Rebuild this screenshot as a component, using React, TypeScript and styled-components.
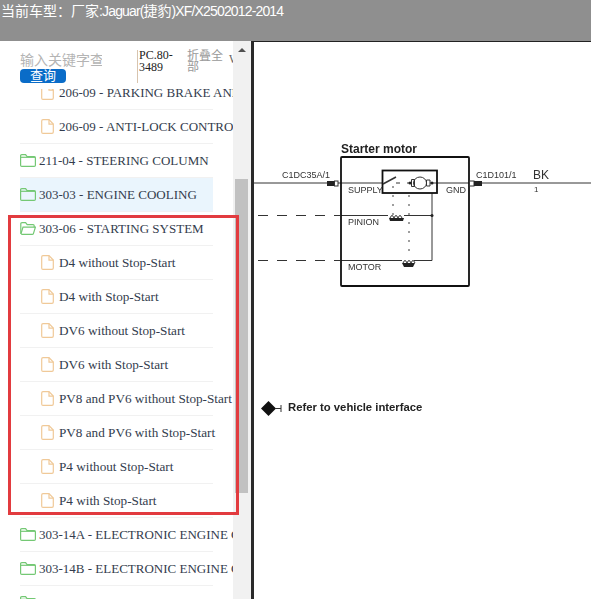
import styled, { createGlobalStyle } from "styled-components";

const GlobalStyle = createGlobalStyle`
  html, body {
    margin: 0;
    padding: 0;
    background: #fff;
    overflow: hidden;
  }
  * {
    box-sizing: border-box;
  }
`;

type TreeItem = {
  label: string;
  kind: "folder" | "open" | "file";
  active?: boolean;
  caps?: boolean;
};

const items: TreeItem[] = [
  { label: "206-09 - PARKING BRAKE AND ACTUATION", kind: "file", caps: true },
  { label: "206-09 - ANTI-LOCK CONTROL", kind: "file", caps: true },
  { label: "211-04 - STEERING COLUMN", kind: "folder", caps: true },
  { label: "303-03 - ENGINE COOLING", kind: "folder", active: true, caps: true },
  { label: "303-06 - STARTING SYSTEM", kind: "open", caps: true },
  { label: "D4 without Stop-Start", kind: "file" },
  { label: "D4 with Stop-Start", kind: "file" },
  { label: "DV6 without Stop-Start", kind: "file" },
  { label: "DV6 with Stop-Start", kind: "file" },
  { label: "PV8 and PV6 without Stop-Start", kind: "file" },
  { label: "PV8 and PV6 with Stop-Start", kind: "file" },
  { label: "P4 without Stop-Start", kind: "file" },
  { label: "P4 with Stop-Start", kind: "file" },
  { label: "303-14A - ELECTRONIC ENGINE CONTROLS", kind: "folder", caps: true },
  { label: "303-14B - ELECTRONIC ENGINE CONTROLS", kind: "folder", caps: true },
  { label: "303-14D - ELECTRONIC ENGINE CONTROLS", kind: "folder", caps: true },
];

const TreeIcon = ({ kind }: { kind: TreeItem["kind"] }) => {
  if (kind === "file") {
    return (
      <IconSvg width="13" height="15" viewBox="0 0 13 15" fill="none" stroke="#f0c998" strokeWidth="1.2">
        <path d="M.7 1.900Q.7.6 2 .6h6l4.300 4.400v8.100q0 1.300-1.300 1.300H2q-1.300 0-1.300-1.300z" />
        <path d="M8 .7v4.400h4.300" />
      </IconSvg>
    );
  }
  if (kind === "open") {
    return (
      <IconSvg width="16" height="13" viewBox="0 0 16 13" fill="none" stroke="#74c874" strokeWidth="1.2">
        <path d="M.8 11.800V1.800Q.8.6 2 .6h3.600L7.200 2.600h5.900q1.100 0 1.100 1.100v1.500" />
        <path d="M.9 12.200 3 5.200h12.400l-1.900 6.100q-.3 1.100-1.300 1.100H1.300" />
      </IconSvg>
    );
  }
  return (
    <IconSvg width="16" height="13" viewBox="0 0 16 13" fill="none" stroke="#74c874" strokeWidth="1.2">
      <path d="M.6 2.900V1.800Q.6.6 1.800.6h3.800L7.100 2.700h7.100q1.200 0 1.200 1.200v7.300q0 1.200-1.200 1.200H1.800Q.6 12.400.6 11.200z" />
      <path d="M.6 3.300h14.800" />
    </IconSvg>
  );
};

// hump row used by the pinion and motor solenoids
const coil = (x: number, y: number, n: number) => {
  let d = `M${x} ${y}`;
  for (let i = 0; i < n; i++) d += `q2-5 4 0`;
  return d;
};

const dots = (x: number, from: number, to: number, step: number) => {
  const out: number[] = [];
  for (let y = from; y <= to; y += step) out.push(y);
  return out.map((y) => <circle key={`${x}-${y}`} cx={x} cy={y} r="0.8" />);
};

// viewBox is in page pixels so the coordinates read straight off the reference
const CircuitDiagram = () => (
  <Diagram viewBox="254 42 337 557" width="337" height="557">
    <g fill="none" stroke="#333" strokeWidth="1">
      <path d="M254 183H327M338 183H383M396 183H400M407 183H411M430 183H437M437 183H469M482 183H591" />
      <path d="M258 215.500H340" strokeDasharray="10 9" />
      <path d="M258 260.500H340" strokeDasharray="10 9" />
      <path d="M341 215.500H388M404 215.500H432M341 260.500H402M414 260.500H432V193" />
    </g>
    <g fill="none" stroke="#111" strokeWidth="1.800">
      <rect x="341" y="157" width="128" height="129" rx="1" />
      <rect x="382.500" y="170.500" width="54.500" height="22.500" />
    </g>
    <g fill="none" stroke="#333" strokeWidth="1">
      <path d="M383 184 L396 177" strokeWidth="1.500" />
      <ellipse cx="420" cy="183" rx="6.500" ry="6" />
      <path d="M411.500 179.500h3v7h-3zM426.500 180h3.500v6h-3.500z" />
      <path d={coil(390, 218, 3)} />
      <path d={coil(403, 263, 3)} />
      <rect x="334.500" y="181" width="3.500" height="5" />
      <rect x="469.500" y="181" width="4.500" height="5" />
    </g>
    <g fill="#222">
      <circle cx="410" cy="183" r="1.500" />
      <circle cx="432" cy="183" r="1.500" />
      <circle cx="432" cy="215.500" r="1.500" />
      <rect x="327" y="181" width="7" height="5" />
      <rect x="474" y="181" width="8" height="5" />
      <path d="M389 218h15l-1 3h-13zM402 263h13l-2 4h-9z" />
      {dots(393, 187, 214, 9)}
      {dots(409, 196, 258, 9)}
    </g>
    <TitleText x="341" y="153">Starter motor</TitleText>
    <SmallText x="282" y="178">C1DC35A/1</SmallText>
    <SmallText x="476" y="178">C1D101/1</SmallText>
    <WireText x="533" y="179">BK</WireText>
    <TinyText x="534" y="192">1</TinyText>
    <SmallText x="348" y="193">SUPPLY</SmallText>
    <SmallText x="446" y="193">GND</SmallText>
    <SmallText x="348" y="225">PINION</SmallText>
    <SmallText x="348" y="270">MOTOR</SmallText>
    <path d="M268.500 401l-7.500 7.500 7.500 7.500 7.500-7.500z" fill="#111" />
    <path d="M275 408.500H281M281 405V412" stroke="#333" fill="none" />
    <NoteText x="288" y="411">Refer to vehicle interface</NoteText>
  </Diagram>
);

export default function App() {
  return (
    <>
      <GlobalStyle />
      <Page>
        <Header>
          当前车型：厂家<Latin>:Jaguar(</Latin>捷豹<Latin>)XF/X2502012-2014</Latin>
        </Header>
        <Body>
          <Sidebar>
            <Panel>
              <SearchBar>
                <SearchBox>
                  <SearchInput placeholder="输入关键字查询" readOnly />
                  <SearchButton>查询</SearchButton>
                </SearchBox>
                <PartNo>PC.80-3489</PartNo>
                <Collapse>折叠全部</Collapse>
                <Extra>W</Extra>
              </SearchBar>
              <TreeList>
                {items.map((item) => (
                  <TreeRow key={item.label} $active={item.active} $child={item.kind === "file"}>
                    <TreeIcon kind={item.kind} />
                    <RowLabel $caps={item.caps}>{item.label}</RowLabel>
                  </TreeRow>
                ))}
              </TreeList>
            </Panel>
            <ScrollTrack>
              <ArrowUp />
              <ScrollThumb />
            </ScrollTrack>
          </Sidebar>
          <Viewer>
            <CircuitDiagram />
          </Viewer>
        </Body>
        <Highlight />
      </Page>
    </>
  );
}

const Page = styled.div`
  position: relative;
  width: 591px;
  height: 599px;
  overflow: hidden;
  display: flex;
  flex-direction: column;
  background: #fff;
`;

const Header = styled.div`
  height: 41px;
  padding: 2px 0 0 1px;
  background: #8f8f8f;
  color: #fff;
  font: 14px/18px "Liberation Sans", "Noto Sans CJK SC", sans-serif;
  white-space: pre;
`;

const Latin = styled.span`
  font-size: 14px;
  letter-spacing: -0.85px;
`;

const Body = styled.div`
  flex: 1;
  display: flex;
  min-height: 0;
`;

const Sidebar = styled.div`
  width: 251px;
  flex: none;
  display: flex;
`;

const Panel = styled.div`
  width: 233px;
  flex: none;
  display: flex;
  flex-direction: column;
  overflow: hidden;
`;

const SearchBar = styled.div`
  height: 48px;
  flex: none;
  display: flex;
  align-items: flex-start;
  padding: 9px 0 0 20px;
  font-family: "Liberation Serif", "Noto Sans CJK SC", serif;
`;

const SearchBox = styled.div`
  width: 82px;
  flex: none;
  margin-right: 35px;
  display: flex;
  flex-direction: column;
`;

const SearchInput = styled.input`
  width: 82px;
  height: 19px;
  padding: 0;
  border: none;
  outline: none;
  background: transparent;
  font: 14px "Liberation Sans", "Noto Sans CJK SC", sans-serif;
  &::placeholder {
    color: #b4b4b4;
    opacity: 1;
  }
`;

const SearchButton = styled.div`
  width: 46px;
  height: 14px;
  border-radius: 4px;
  background: #0a6cc8;
  color: #fff;
  text-align: center;
  font: 13px/14px "Liberation Sans", "Noto Sans CJK SC", sans-serif;
`;

const PartNo = styled.div`
  width: 50px;
  flex: none;
  height: 33px;
  padding-left: 1px;
  border-left: 1px solid #d8c4ae;
  color: #222;
  font-size: 12px;
  line-height: 11.500px;
`;

const Collapse = styled.div`
  width: 37px;
  flex: none;
  margin-top: 1px;
  color: #999;
  font: 12px/11px "Liberation Sans", "Noto Sans CJK SC", sans-serif;
`;

const Extra = styled.div`
  flex: none;
  margin: 2px 0 0 5px;
  color: #666;
  font-size: 12px;
`;

const TreeList = styled.div`
  flex: 1;
  min-height: 0;
  overflow: hidden;
  padding-left: 20px;
  & > :first-child {
    margin-top: -13px;
  }
`;

const TreeRow = styled.div<{ $active?: boolean; $child?: boolean }>`
  width: 193px;
  height: 34px;
  display: flex;
  align-items: center;
  gap: ${(p) => (p.$child ? "5px" : "3px")};
  padding-left: ${(p) => (p.$child ? "21px" : "0")};
  border-bottom: 1px solid #f1f1f1;
  background: ${(p) => (p.$active ? "#eaf5fd" : "transparent")};
`;

const IconSvg = styled.svg`
  flex: none;
  display: block;
`;

const RowLabel = styled.span<{ $caps?: boolean }>`
  flex: none;
  color: #333c4d;
  font: ${(p) => (p.$caps ? "13px" : "13.200px")}/16px "Liberation Serif", serif;
  white-space: nowrap;
`;

const ScrollTrack = styled.div`
  position: relative;
  width: 18px;
  flex: none;
  background: #f1f1f1;
  padding: 138px 2px 0;
`;

const ArrowUp = styled.div`
  position: absolute;
  top: 7px;
  left: 5px;
  border-left: 4px solid transparent;
  border-right: 4px solid transparent;
  border-bottom: 4px solid #505050;
`;

const ScrollThumb = styled.div`
  width: 13px;
  height: 314px;
  background: #c1c1c1;
`;

const Viewer = styled.div`
  flex: 1;
  border-left: 3px solid #2a2a2a;
  border-top: 1px solid #222;
  background: #fff;
  overflow: hidden;
`;

const Diagram = styled.svg`
  display: block;
  filter: blur(0.35px);
`;

const TitleText = styled.text`
  font: bold 12px "Liberation Sans", sans-serif;
  fill: #222;
`;

const NoteText = styled.text`
  font: bold 11.300px "Liberation Sans", sans-serif;
  fill: #222;
`;

const SmallText = styled.text`
  font: 9px "Liberation Sans", sans-serif;
  fill: #333;
`;

const WireText = styled.text`
  font: 12px "Liberation Sans", sans-serif;
  fill: #333;
`;

const TinyText = styled.text`
  font: 8px "Liberation Sans", sans-serif;
  fill: #333;
`;

const Highlight = styled.div`
  position: absolute;
  left: 8px;
  top: 215px;
  width: 231px;
  height: 300px;
  border: 3px solid #e23b3f;
  pointer-events: none;
`;
